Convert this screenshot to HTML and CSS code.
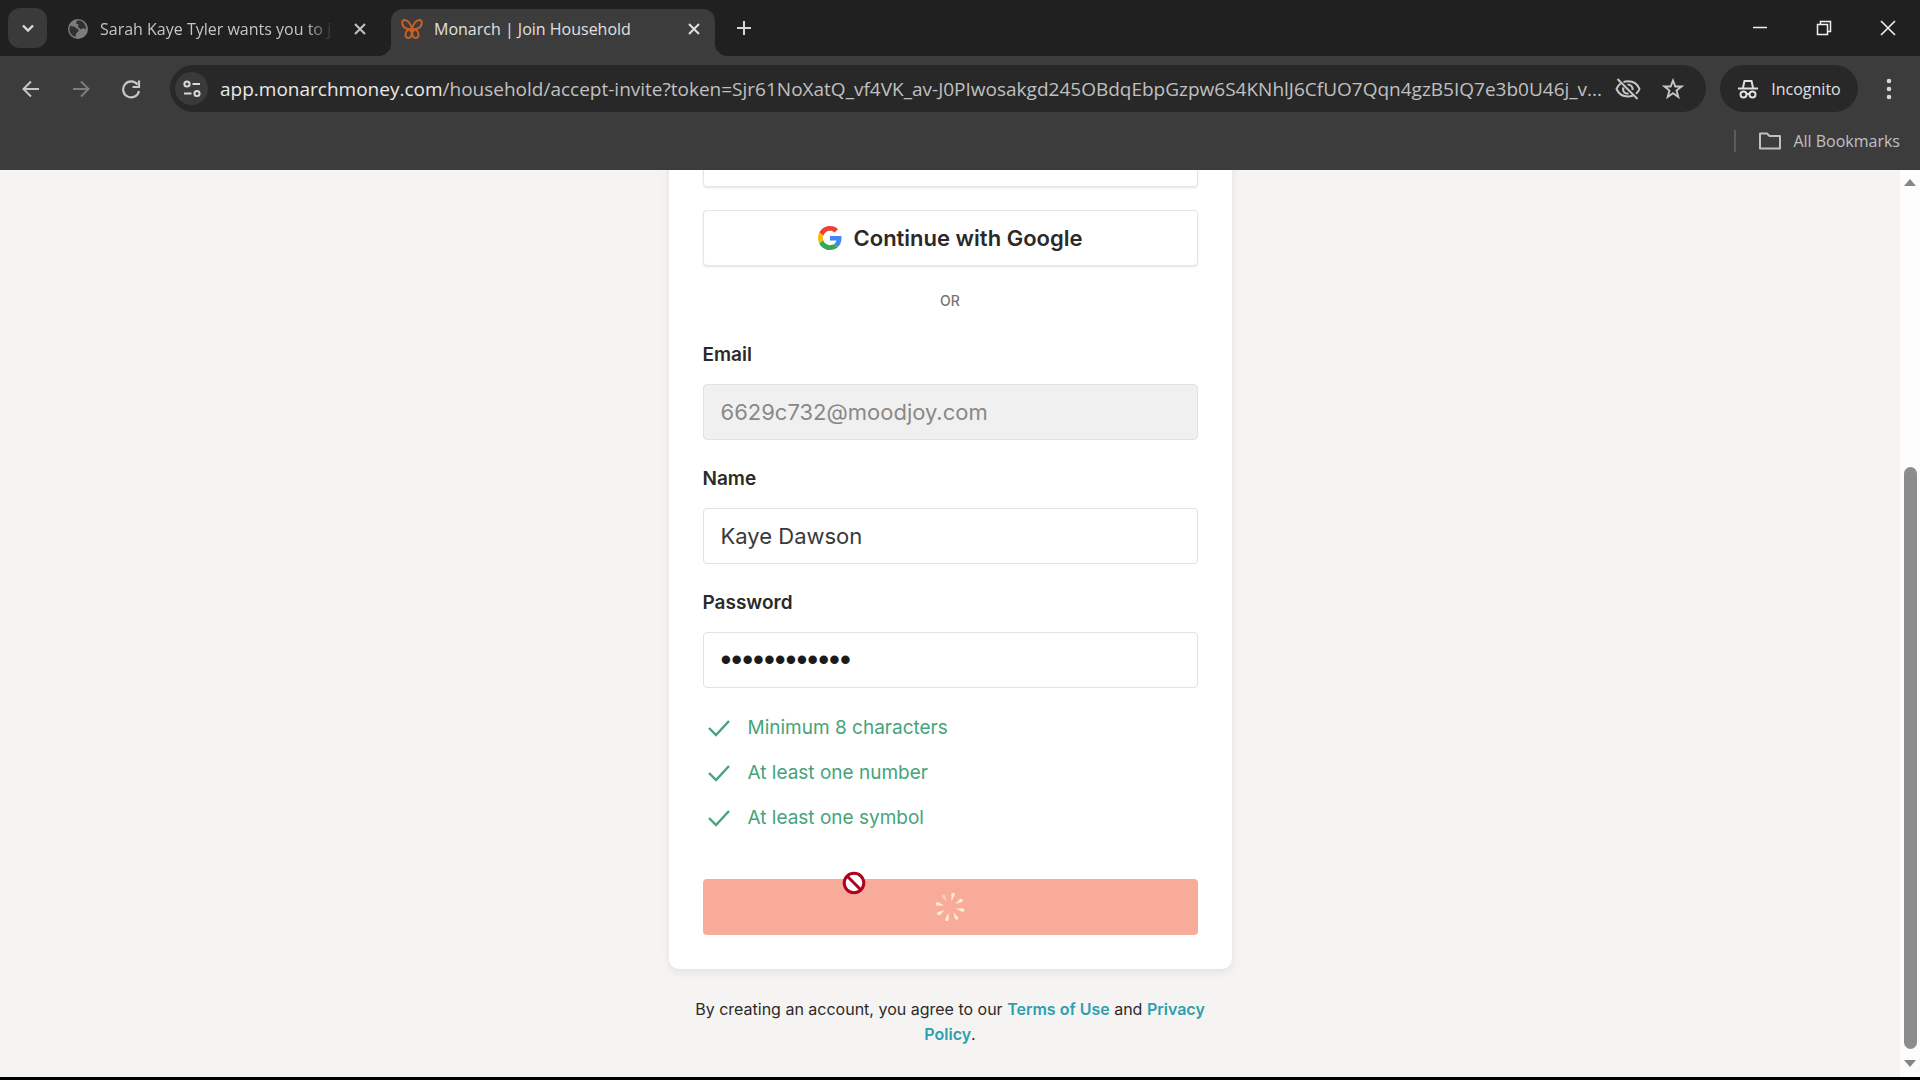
FILE: index.html
```html
<!DOCTYPE html>
<html lang="en">
<head>
<meta charset="utf-8">
<meta name="viewport" content="width=device-width, initial-scale=1">
<title>Monarch | Join Household</title>
<link rel="stylesheet" href="styles.css">
</head>
<body>
<header class="browser">
  <div class="tabstrip">
    <button class="tab-search" aria-label="Search tabs"><svg width="16" height="16" viewBox="0 0 16 16"><path d="M3 5.500l5 5 5-5" fill="none" stroke="currentColor" stroke-width="2.400"/></svg></button>
    <div class="tab">
      <svg class="favicon" viewBox="0 0 22 22"><circle cx="11" cy="11" r="10" fill="#7d7d7d"/><path d="M3.500 7.500c2 1.500 4 .5 5 2s3 1 3 3-2 1.500-2.500 3.500l-.5 3C4 17.500 2.300 14 2.500 10.500zM10 2.500l-1 3 2.500 1-.5 2.500 3 2.500 2-1.500 3 1.500c.5-4-2.500-8-6-9z" fill="#303030"/></svg>
      <span class="tab-title faded">Sarah Kaye Tyler wants you to j</span>
      <button class="tab-close" aria-label="Close tab"><svg width="16" height="16" viewBox="0 0 16 16"><path d="M3 3l10 10M13 3L3 13" stroke="currentColor" stroke-width="2"/></svg></button>
    </div>
    <div class="tab active">
      <svg class="favicon" viewBox="0 0 22 22"><g fill="none" stroke="#c65f28" stroke-width="2" stroke-linejoin="round"><path d="M11 11.500C10 5 6 1.500 3 2 0 3 1 9 5 10.500c2 .8 4 .8 6 1zM11 11.500C12 5 16 1.500 19 2c3 1 2 7-2 8.500-2 .8-4 .8-6 1z"/><path d="M11 11.500c-4-.5-7 2-6.500 6 .5 3 4 3.500 5.500 1 .8-2 1-4.500 1-7zM11 11.500c4-.5 7 2 6.500 6-.5 3-4 3.500-5.500 1-.8-2-1-4.500-1-7z"/></g><circle cx="11" cy="12" r="2.600" fill="#c65f28"/></svg>
      <span class="tab-title">Monarch | Join Household</span>
      <button class="tab-close" aria-label="Close tab"><svg width="16" height="16" viewBox="0 0 16 16"><path d="M3 3l10 10M13 3L3 13" stroke="currentColor" stroke-width="2"/></svg></button>
    </div>
    <button class="new-tab" aria-label="New tab"><svg width="22" height="22" viewBox="0 0 22 22"><path d="M11 4v14M4 11h14" stroke="currentColor" stroke-width="2"/></svg></button>
    <div class="window-controls">
      <button aria-label="Minimize"><svg width="16" height="16" viewBox="0 0 16 16"><path d="M1 7.500h14" stroke="currentColor" stroke-width="1.500"/></svg></button>
      <button aria-label="Restore"><svg width="16" height="16" viewBox="0 0 16 16"><path d="M1.500 4.500h10v10h-10zM4.500 4.500v-3h10v10h-3" fill="none" stroke="currentColor" stroke-width="1.500"/></svg></button>
      <button aria-label="Close"><svg width="16" height="16" viewBox="0 0 16 16"><path d="M1 1l14 14M15 1L1 15" stroke="currentColor" stroke-width="1.600"/></svg></button>
    </div>
  </div>
  <div class="toolbar">
    <div class="nav">
      <button aria-label="Back"><svg width="20" height="20" viewBox="0 0 20 20"><path d="M18 10H3M10 2.500L2.500 10l7.500 7.500" fill="none" stroke="currentColor" stroke-width="2"/></svg></button>
      <button aria-label="Forward" disabled><svg width="20" height="20" viewBox="0 0 20 20"><path d="M2 10h15M10 2.500l7.500 7.500-7.500 7.500" fill="none" stroke="currentColor" stroke-width="2"/></svg></button>
      <button aria-label="Reload"><svg width="20" height="20" viewBox="0 0 20 20"><path d="M16.500 5.500A8 8 0 1 0 18 12M18 1.500v6.500h-6.500" fill="none" stroke="currentColor" stroke-width="2.200"/></svg></button>
    </div>
    <div class="address">
      <button class="site-info" aria-label="Site information"><svg width="20" height="20" viewBox="0 0 20 20" fill="none" stroke="currentColor" stroke-width="2"><circle cx="5" cy="5" r="2.600"/><path d="M10.500 5H18M2 14.500h7.500"/><circle cx="15" cy="14.500" r="2.600"/></svg></button>
      <span class="url"><span class="host">app.monarchmoney.com</span>/household/accept-invite?token=Sjr61NoXatQ_vf4VK_av-J0PIwosakgd245OBdqEbpGzpw6S4KNhlJ6CfUO7Qqn4gzB5IQ7e3b0U46j_v...</span>
      <button class="address-action" aria-label="Third-party cookies blocked"><svg width="26" height="24" viewBox="0 0 26 24" fill="none" stroke="currentColor" stroke-width="2"><path d="M5.500 6.500C3.500 8 2 10.500 1.500 12 4 17.500 8.500 19.500 13 19.500c2 0 3.500-.3 5-1M8.500 5c1.500-.5 3-.7 4.500-.7 5 0 9.500 2.700 11.500 7.700-.7 1.800-2 3.500-3.500 4.700"/><path d="M8.500 10.500c-1.500 3.500 1.500 6.700 5 6M12.500 7.500c3.500 0 5.500 2.500 5 5.500"/><path d="M2.500 2l20 20"/></svg></button>
      <button class="address-action" aria-label="Bookmark this tab"><svg width="22" height="22" viewBox="0 0 22 22"><path d="M11 2.500l2.300 6h6.200l-5 4 1.800 6.500-5.300-3.800L5.700 19l1.800-6.500-5-4h6.200z" fill="none" stroke="currentColor" stroke-width="1.900"/></svg></button>
    </div>
    <button class="incognito"><svg width="22" height="22" viewBox="0 0 22 22" fill="none" stroke="currentColor" stroke-width="2"><path d="M6 9.500L7.500 3H14.500L16 9.500M1 10.500h20"/><circle cx="6.500" cy="16.500" r="3"/><circle cx="15.500" cy="16.500" r="3"/><path d="M9.500 16h3"/></svg><span>Incognito</span></button>
    <button class="menu" aria-label="Menu"><svg width="6" height="22" viewBox="0 0 6 22" fill="currentColor"><circle cx="3" cy="3" r="2.300"/><circle cx="3" cy="11" r="2.300"/><circle cx="3" cy="19" r="2.300"/></svg></button>
  </div>
  <div class="bookmarks">
    <span class="divider"></span>
    <button class="all-bookmarks"><svg width="24" height="20" viewBox="0 0 24 20"><path d="M2 17.500V2.500h7l2.500 2.500H22v12.500z" fill="none" stroke="currentColor" stroke-width="2" stroke-linejoin="round"/></svg><span>All Bookmarks</span></button>
  </div>
</header>
<div class="viewport">
  <main class="page">
    <form class="card">
      <button type="button" class="social" aria-label="Continue with Apple"></button>
      <button type="button" class="social"><svg width="24" height="24" viewBox="0 0 48 48"><path fill="#EA4335" d="M24 9.500c3.540 0 6.710 1.220 9.210 3.600l6.850-6.850C35.900 2.380 30.470 0 24 0 14.620 0 6.510 5.380 2.560 13.220l7.980 6.190C12.430 13.720 17.740 9.500 24 9.500z"/><path fill="#4285F4" d="M46.980 24.550c0-1.570-.15-3.090-.38-4.550H24v9.020h12.940c-.58 2.960-2.260 5.480-4.780 7.180l7.730 6c4.510-4.180 7.090-10.360 7.090-17.650z"/><path fill="#FBBC05" d="M10.530 28.590c-.48-1.450-.76-2.990-.76-4.590s.27-3.140.76-4.590l-7.980-6.190C.92 16.460 0 20.120 0 24c0 3.880.92 7.540 2.560 10.780l7.970-6.190z"/><path fill="#34A853" d="M24 48c6.480 0 11.930-2.130 15.890-5.810l-7.730-6c-2.150 1.450-4.920 2.300-8.160 2.300-6.260 0-11.570-4.220-13.470-9.910l-7.980 6.190C6.510 42.620 14.620 48 24 48z"/></svg><span>Continue with Google</span></button>
      <p class="or">OR</p>
      <div class="field"><label for="email">Email</label><input id="email" type="email" value="6629c732@moodjoy.com" disabled></div>
      <div class="field"><label for="name">Name</label><input id="name" type="text" value="Kaye Dawson"></div>
      <div class="field"><label for="password">Password</label><input id="password" class="secret" type="password" value="Example#1234"></div>
      <ul class="rules">
        <li><svg width="24" height="24" viewBox="0 0 24 24"><path d="M2 12l7 7L22 5" fill="none" stroke="currentColor" stroke-width="2.400"/></svg>Minimum 8 characters</li>
        <li><svg width="24" height="24" viewBox="0 0 24 24"><path d="M2 12l7 7L22 5" fill="none" stroke="currentColor" stroke-width="2.400"/></svg>At least one number</li>
        <li><svg width="24" height="24" viewBox="0 0 24 24"><path d="M2 12l7 7L22 5" fill="none" stroke="currentColor" stroke-width="2.400"/></svg>At least one symbol</li>
      </ul>
      <div class="submit-row">
        <button class="submit" aria-label="Creating account" disabled><svg width="32" height="32" viewBox="-16 -16 32 32"><defs><path id="blade" d="M0 -6L-1.900 -13Q0 -16.500 1.900 -13z"/></defs><g fill="#fcecd0" transform="rotate(14)"><use href="#blade"/><use href="#blade" transform="rotate(45)"/><use href="#blade" transform="rotate(90)"/><use href="#blade" transform="rotate(135)"/><use href="#blade" transform="rotate(180)"/><use href="#blade" transform="rotate(225)"/><use href="#blade" transform="rotate(270)"/><use href="#blade" transform="rotate(315)" opacity=".55"/></g></svg></button>
        <svg class="cursor" width="24" height="24" viewBox="0 0 24 24"><circle cx="12" cy="12" r="9.800" fill="#fff" stroke="#b00020" stroke-width="3"/><path d="M5.500 5.500l13 13" stroke="#b00020" stroke-width="3"/></svg>
      </div>
    </form>
    <p class="legal">By creating an account, you agree to our <a href="#terms">Terms of Use</a> and <a href="#privacy">Privacy Policy</a>.</p>
  </main>
  <div class="scrollbar">
    <svg width="12" height="7" viewBox="0 0 12 7"><path d="M0 7L6 0l6 7z" fill="#858585"/></svg>
    <span class="thumb"></span>
    <svg width="12" height="7" viewBox="0 0 12 7"><path d="M0 0l6 7 6-7z" fill="#858585"/></svg>
  </div>
</div>
</body>
</html>
```
FILE: styles.css
```css
* { box-sizing: border-box; }
body {
  margin: 0;
  height: 100vh;
  display: flex;
  flex-direction: column;
  overflow: hidden;
  border-bottom: 3px solid #000;
  font-family: Inter, "Liberation Sans", sans-serif;
  color: #2b2a29;
  background: #f5f4f2;
}
button { border: 0; padding: 0; background: none; color: inherit; font: inherit; display: flex; align-items: center; justify-content: center; }
svg { display: block; flex: none; }
p, ul { margin: 0; padding: 0; }

.browser { flex: none; background: #3c3c3c; color: #d8d8d8; font-family: "Open Sans", "Noto Sans", sans-serif; font-size: 16px; padding-bottom: 9px; }
.tabstrip { height: 56px; display: flex; background: #202020; padding-left: 8px; }
.tab-search { width: 39px; height: 40px; margin: 8px 10px 0 0; border-radius: 12px; background: #3a3a3a; }
.tab { width: 324px; margin: 9px 10px 0 0; padding: 0 13px 8px 10px; display: flex; align-items: center; color: #c4c4c4; }
.favicon { width: 22px; height: 22px; }
.tab-title { flex: 1; min-width: 0; margin: 0 18px 0 11px; overflow: hidden; white-space: nowrap; }
.faded { -webkit-mask-image: linear-gradient(90deg, #000 88%, transparent); mask-image: linear-gradient(90deg, #000 88%, transparent); }
.tab.active { position: relative; background: #3c3c3c; color: #e0e0e0; border-radius: 12px 12px 0 0; }
.tab.active::before, .tab.active::after { content: ""; position: absolute; bottom: 0; width: 12px; height: 12px; }
.tab.active::before { left: -12px; background: radial-gradient(circle at 0 0, transparent 12px, #3c3c3c 12px); }
.tab.active::after { right: -12px; background: radial-gradient(circle at 100% 0, transparent 12px, #3c3c3c 12px); }
.new-tab { margin-left: 8px; }
.window-controls { margin-left: auto; display: flex; color: #f0f0f0; }
.window-controls button { width: 64px; }

.toolbar { display: flex; align-items: center; padding: 9px 0 9px 6px; }
.nav { display: flex; margin-right: 14px; color: #c7c7c7; }
.nav button { width: 50px; height: 47px; }
.nav button:disabled { color: #7d7d7d; }
.address { flex: 1; min-width: 0; height: 47px; display: flex; align-items: center; padding: 0 20px 0 5px; border-radius: 24px; background: #282828; }
.site-info { flex: none; width: 33px; height: 33px; border-radius: 50%; background: #3a3a3a; }
.url { flex: 1; min-width: 0; margin: 0 8px 0 12px; overflow: hidden; white-space: nowrap; font-size: 19px; color: #c0c0c0; }
.host { color: #e8e8e8; }
.address-action { width: 26px; color: #c7c7c7; }
.address-action + .address-action { margin-left: 19px; }
.incognito { width: 138px; height: 47px; margin-left: 14px; gap: 12px; border-radius: 24px; background: #282828; color: #e0e0e0; }
.menu { width: 62px; height: 47px; }
.bookmarks { height: 40px; display: flex; align-items: center; justify-content: flex-end; padding-right: 20px; }
.divider { width: 2px; height: 22px; margin-right: 22px; background: #5c5c5c; }
.all-bookmarks { gap: 11px; color: #c0c0c0; }

.viewport { flex: 1; min-height: 0; display: flex; overflow: hidden; }
.page { flex: 1; display: flex; flex-direction: column; align-items: center; justify-content: flex-end; padding-bottom: 30px; }
.card { width: 563px; padding: 34px; background: #fff; border-radius: 10px; box-shadow: 0 3px 8px rgba(0, 0, 0, .08); }
.social { width: 100%; height: 56px; margin-bottom: 23px; gap: 12px; border: 1px solid #e6e5e3; border-radius: 4px; background: #fff; box-shadow: 0 1px 2px rgba(0, 0, 0, .1); font-size: 22px; font-weight: 600; }
.or { margin-bottom: 30px; text-align: center; font-size: 14px; line-height: 24px; font-weight: 500; color: #777573; }
.field { display: flex; flex-direction: column; gap: 17px; margin-bottom: 27px; }
.field label { font-size: 19px; line-height: 24px; font-weight: 600; }
.field input { width: 100%; height: 56px; padding: 0 17px; border: 1px solid #e4e2e0; border-radius: 4px; background: #fff; color: #3a3938; font-family: inherit; font-size: 22px; }
.field input:disabled { background: #f1f0f0; color: #8a8886; }
.field .secret { color: #1c1b1a; font-family: "Liberation Sans", sans-serif; font-size: 31px; }
.rules { list-style: none; margin: -10px 0 39px; color: #45a47a; font-size: 19px; line-height: 45px; }
.rules li { display: flex; align-items: center; gap: 17px; padding-left: 4px; }
.submit-row { position: relative; }
.submit { width: 100%; height: 56px; border-radius: 4px; background: #f7ab98; }
.cursor { position: absolute; left: 139px; top: -8px; }
.legal { width: 563px; margin-top: 28px; padding: 0 20px; text-align: center; font-size: 16px; line-height: 25px; }
.legal a { color: #2e9fb0; font-weight: 600; text-decoration: none; }

.scrollbar { width: 20px; display: flex; flex-direction: column; align-items: center; padding: 9px 0 10px; background: #fcfcfc; }
.thumb { width: 13px; flex: 1; margin: 281px 0 11px; border-radius: 7px; background: #8c8c8c; }
```
